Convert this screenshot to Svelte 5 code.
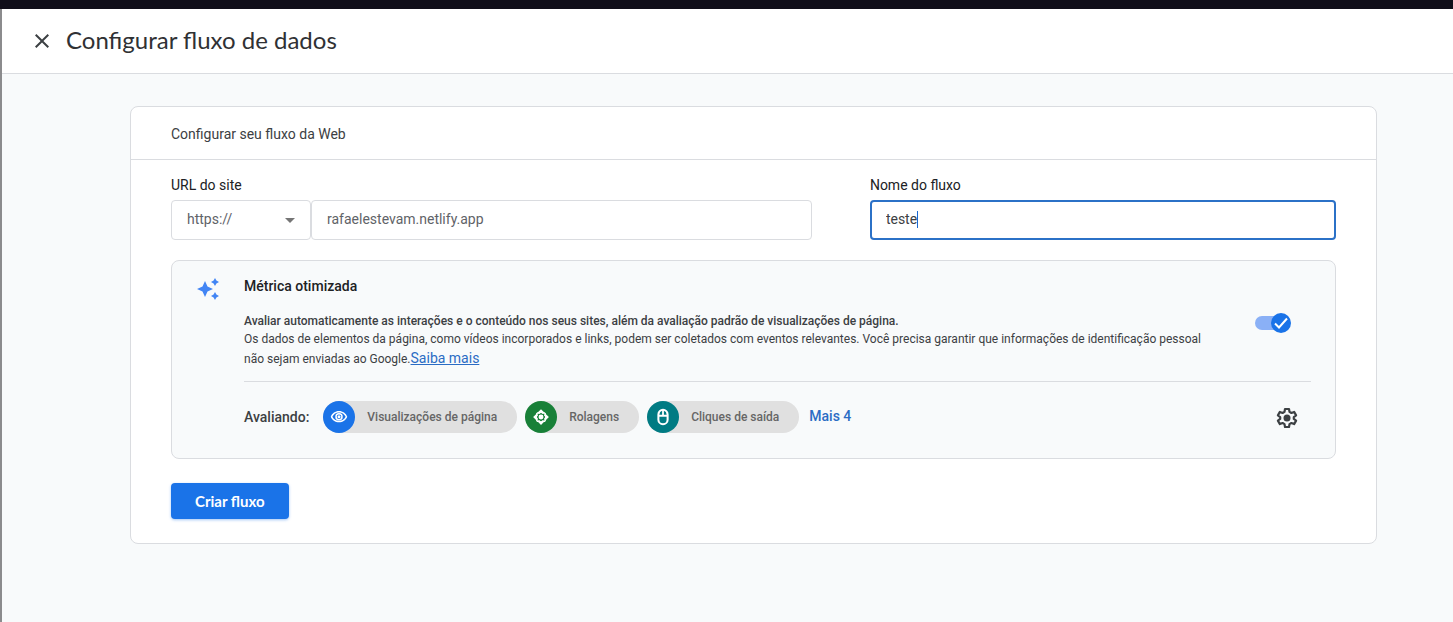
<script>
	let protocol = "https://";
	let url = "rafaelestevam.netlify.app";
	let name = "teste";
	let enhanced = true;

	const events = [
		{ id: "views", label: "Visualizações de página" },
		{ id: "scrolls", label: "Rolagens" },
		{ id: "clicks", label: "Cliques de saída" },
	];
</script>

<div class="topbar"></div>
<div class="panel">
	<header>
		<button class="close" type="button" aria-label="Fechar">
			<svg width="24" height="24" viewBox="0 0 24 24">
				<path
					fill="#3c4043"
					d="M19 6.41 17.59 5 12 10.59 6.41 5 5 6.41 10.59 12 5 17.59 6.41 19 12 13.41 17.59 19 19 17.59 13.41 12z"
				/>
			</svg>
		</button>
		<h1>Configurar fluxo de dados</h1>
	</header>

	<main>
		<form class="card" onsubmit={(e) => e.preventDefault()}>
			<h2>Configurar seu fluxo da Web</h2>

			<div class="body">
				<div class="fields">
					<div>
						<label for="url">URL do site</label>
						<div class="url">
							<div class="select">
								<select bind:value={protocol} aria-label="Protocolo">
									<option>https://</option>
									<option>http://</option>
								</select>
								<svg width="10" height="5" viewBox="0 0 10 5">
									<path fill="#757575" d="M0 0h10L5 5z" />
								</svg>
							</div>
							<input id="url" type="text" bind:value={url} />
						</div>
					</div>
					<div>
						<label for="name">Nome do fluxo</label>
						<div class="name">
							<input id="name" type="text" bind:value={name} />
							<span class="caret"></span>
						</div>
					</div>
				</div>

				<section class="metric">
					<svg class="spark" width="24" height="24" viewBox="0 0 24 24">
						<path
							fill="#4285f4"
							d="M9 4l2.500 5.500L17 12l-5.500 2.500L9 20l-2.500-5.500L1 12l5.500-2.500zM19 1l1.400 2.600L23 5l-2.600 1.400L19 9l-1.400-2.600L15 5l2.600-1.400zM19 15l1.400 2.600L23 19l-2.600 1.400L19 23l-1.400-2.600L15 19l2.600-1.400z"
						/>
					</svg>

					<div class="content">
						<h3>Métrica otimizada</h3>
						<div class="summary">
							<div class="text">
								<strong id="enhanced">
									Avaliar automaticamente as interações e o conteúdo nos seus sites, além da
									avaliação padrão de visualizações de página.
								</strong>
								<p>
									Os dados de elementos da página, como vídeos incorporados e links, podem ser
									coletados com eventos relevantes. Você precisa garantir que informações de
									identificação pessoal não sejam enviadas ao Google.<a href="#saiba-mais"
										>Saiba mais</a
									>
								</p>
							</div>
							<label class="toggle">
								<input type="checkbox" bind:checked={enhanced} aria-labelledby="enhanced" />
								<span class="thumb">
									<svg width="20" height="20" viewBox="0 0 20 20">
										<path d="M4 10.500l4 4 8-9" fill="none" stroke="#fff" stroke-width="2" />
									</svg>
								</span>
							</label>
						</div>

						<div class="events">
							<span class="measuring">Avaliando:</span>
							{#each events as event}
								<span class="chip">
									<span class="icon {event.id}">
										<svg width="18" height="18" viewBox="0 0 24 24">
											{#if event.id === "views"}
												<path
													d="M12 6c3.790 0 7.170 2.130 8.820 5.500C19.170 14.870 15.790 17 12 17s-7.170-2.130-8.820-5.500C4.830 8.130 8.210 6 12 6m0-2C7 4 2.730 7.110 1 11.500 2.730 15.890 7 19 12 19s9.270-3.110 11-7.500C21.270 7.110 17 4 12 4z"
												/>
												<circle cx="12" cy="11.500" r="4" fill="none" stroke="#fff" stroke-width="2" />
												<circle cx="12" cy="11.500" r="2" />
											{:else if event.id === "scrolls"}
												<path
													d="M12 1.500l4.500 4.500-1.700 1.700L12 6.500 9.200 7.700 7.500 6zM12 22.500L7.500 18l1.700-1.700 2.800 1.200 2.800-1.200 1.700 1.700zM1.500 12L6 7.500l1.700 1.700L6.500 12l1.200 2.800L6 16.500zM22.500 12L18 16.500l-1.700-1.700 1.200-2.800-1.200-2.800L18 7.500z"
												/>
												<path
													fill="none"
													stroke="#fff"
													stroke-width="2"
													d="M6.500 6.500h4M6.500 6.500v4M17.500 6.500h-4M17.500 6.500v4M6.500 17.500h4M6.500 17.500v-4M17.500 17.500h-4M17.500 17.500v-4"
												/>
												<circle cx="12" cy="12" r="3.300" />
											{:else}
												<path
													fill-rule="evenodd"
													d="M12 1a7.500 7.500 0 00-7.500 7.500v7a7.500 7.500 0 0015 0v-7A7.500 7.500 0 0012 1zM10.800 3.800V9H7.200v-.5a5 5 0 013.600-4.700zM13.200 3.800a5 5 0 013.600 4.700V9h-3.600zM7.200 11.500h9.600v4a4.800 4.800 0 01-9.600 0z"
												/>
											{/if}
										</svg>
									</span>
									{event.label}
								</span>
							{/each}
							<a class="more" href="#mais">Mais 4</a>
							<button class="gear" type="button" aria-label="Configurações">
								<svg width="24" height="24" viewBox="0 0 24 24">
									<path
										fill="none"
										stroke="#3c4043"
										stroke-width="2.200"
										stroke-linejoin="round"
										d="M10 3h4l.5 2.900 1.900 1.100 2.700-1.100 2 3.500-2.300 1.700v1.800l2.300 1.700-2 3.500-2.700-1.100-1.900 1.100L14 21h-4l-.5-2.900L7.600 17l-2.700 1.100-2-3.500 2.300-1.700v-1.800L2.900 9.400l2-3.500L7.600 7l1.900-1.100z"
									/>
									<circle cx="12" cy="12" r="3.500" fill="#3c4043" />
								</svg>
							</button>
						</div>
					</div>
				</section>

				<button class="submit" type="submit">Criar fluxo</button>
			</div>
		</form>
	</main>
</div>

<style>
	:global(body) {
		background: #f8f9fa;
		font-family: Roboto, "Liberation Sans", sans-serif;
		font-size: 14px;
		color: #3c4043;
	}

	.topbar {
		height: 9px;
		background: #100e19;
	}

	.panel {
		box-sizing: border-box;
		min-height: calc(100vh - 9px);
		border-left: 2px solid #8b8b8d;
		background: #f8fafb;
	}

	header {
		display: flex;
		align-items: center;
		gap: 12px;
		height: 64px;
		padding-left: 28px;
		border-bottom: 1px solid #dadce0;
		background: #fff;
	}

	button {
		padding: 0;
		border: 0;
		background: none;
		cursor: pointer;
	}

	button svg {
		display: block;
	}

	h1,
	h2,
	h3,
	p {
		margin: 0;
	}

	h1 {
		padding-bottom: 2px;
		font-family: "Google Sans", Lato, sans-serif;
		font-size: 24px;
		font-weight: 400;
		line-height: 28px;
		color: #303134;
	}

	main {
		padding: 32px 76px 32px 128px;
	}

	.card {
		border: 1px solid #dadce0;
		border-radius: 8px;
		background: #fff;
	}

	h2 {
		padding: 17px 40px 15px;
		border-bottom: 1px solid #dadce0;
		font-size: 14px;
		font-weight: 400;
		line-height: 20px;
	}

	.body {
		padding: 15px 40px 24px;
	}

	.fields {
		display: grid;
		grid-template-columns: 11fr 8fr;
		gap: 58px;
		margin-bottom: 20px;
	}

	.fields label {
		display: block;
		margin-bottom: 5px;
		line-height: 20px;
		color: #202124;
	}

	.url {
		display: flex;
	}

	.select,
	.name {
		position: relative;
	}

	.select {
		flex: 0 0 140px;
	}

	.select svg {
		position: absolute;
		right: 16px;
		top: 18px;
		pointer-events: none;
	}

	select,
	input[type="text"] {
		box-sizing: border-box;
		width: 100%;
		height: 40px;
		padding: 0 15px 2px;
		border: 1px solid #dadce0;
		border-radius: 4px;
		outline: none;
		background: #fff;
		font: inherit;
		color: #5f6368;
		appearance: none;
	}

	input#name {
		padding: 0 14px 2px;
		border: 2px solid #2b71c7;
		color: #3c4043;
	}

	.caret {
		position: absolute;
		left: 47px;
		top: 11px;
		width: 1px;
		height: 17px;
		background: #1967d2;
	}

	.metric {
		display: flex;
		padding: 15px 24px 25px;
		border: 1px solid #dadce0;
		border-radius: 8px;
		background: #f8fafb;
	}

	.spark {
		flex: none;
		margin: 1px 24px 0 0;
	}

	.content {
		flex: 1;
	}

	h3 {
		margin-bottom: 16px;
		font-size: 14px;
		font-weight: 500;
		line-height: 20px;
		color: #202124;
	}

	.summary {
		display: flex;
		align-items: flex-start;
		padding-bottom: 13px;
		border-bottom: 1px solid #dadce0;
	}

	.text {
		flex: 1;
		padding-right: 32px;
		font-size: 12px;
		line-height: 18px;
	}

	.text strong {
		display: block;
		font-weight: 500;
	}

	a {
		color: #2b6cc4;
	}

	.text a {
		font-size: 14px;
		line-height: 20px;
	}

	.toggle {
		display: flex;
		flex: none;
		width: 36px;
		margin: 1px 20px 0 0;
		position: relative;
	}

	.toggle input {
		width: 34px;
		height: 14px;
		margin: 3px 0;
		border-radius: 7px;
		background: #8ab0f6;
		appearance: none;
	}

	.thumb {
		position: absolute;
		right: 0;
		top: 0;
		height: 20px;
		border-radius: 50%;
		background: #1a73e8;
	}

	.thumb svg {
		display: block;
	}

	.events {
		display: flex;
		align-items: center;
		gap: 8px;
		padding-top: 19px;
	}

	.measuring {
		margin-right: 6px;
		font-weight: 500;
	}

	.chip {
		display: flex;
		align-items: center;
		gap: 12px;
		height: 32px;
		padding-right: 20px;
		border-radius: 16px;
		background: #e0e0e0;
		font-size: 12px;
		font-weight: 500;
		color: #666;
	}

	.icon {
		display: grid;
		place-items: center;
		width: 32px;
		height: 32px;
		border-radius: 50%;
		fill: #fff;
	}

	.views {
		background: #1a73e8;
	}

	.scrolls {
		background: #188038;
	}

	.clicks {
		background: #007b83;
	}

	.more {
		padding: 0 0 2px 2px;
		font-weight: 500;
		text-decoration: none;
	}

	.gear {
		margin: 0 12px 0 auto;
		padding-top: 2px;
	}

	.submit {
		height: 36px;
		margin-top: 24px;
		padding: 0 24px;
		border-radius: 4px;
		background: #1a73e8;
		box-shadow: 0 1px 3px #1a73e866;
		font-family: "Google Sans", Lato, sans-serif;
		font-size: 15px;
		font-weight: 700;
		color: #fff;
	}
</style>
